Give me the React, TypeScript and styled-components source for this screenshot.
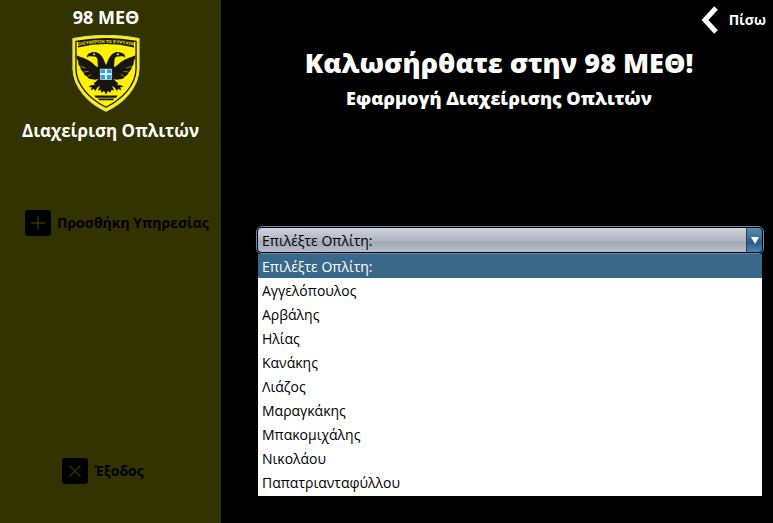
import React, { useState } from "react";
import styled, { createGlobalStyle, css } from "styled-components";

const GlobalStyle = createGlobalStyle`
  *, *::before, *::after { box-sizing: border-box; }
  body { margin: 0; background: #000; font-family: "Open Sans", "Noto Sans", sans-serif; }
`;

const Page = styled.div`
  display: flex;
  min-height: 100vh;
  background: #000;
`;

const Sidebar = styled.aside`
  flex: 0 0 221px;
  display: flex;
  flex-direction: column;
  align-items: center;
  padding: 4px 0 39px;
  background: #333300;
`;

const Badge = styled.div`
  display: flex;
  flex-direction: column;
  align-items: center;
  padding-right: 9px;
`;

const UnitName = styled.div`
  color: #fff;
  font-size: 18px;
  font-weight: 700;
  line-height: 26px;
`;

const Crest = styled.svg`
  width: 68px;
  height: 77px;
  margin-top: 5px;
`;

const SectionName = styled.div`
  margin-top: 6px;
  color: #fff;
  font-size: 17px;
  font-weight: 700;
  line-height: 26px;
`;

const Menu = styled.nav`
  flex: 1;
  align-self: stretch;
  display: flex;
  flex-direction: column;
  justify-content: space-between;
  padding-top: 66px;
`;

const MenuButton = styled.button<{ $centered?: boolean }>`
  display: flex;
  align-items: center;
  justify-content: ${(p) => (p.$centered ? "center" : "flex-start")};
  gap: 6px;
  padding: 0 ${(p) => (p.$centered ? "15px" : "0")} 0 ${(p) => (p.$centered ? "0" : "25px")};
  border: 0;
  background: none;
  color: #000;
  font-family: inherit;
  font-size: 14px;
  font-weight: 700;
  line-height: 26px;
  white-space: nowrap;
  cursor: pointer;
`;

const MenuIcon = styled.svg`
  flex: none;
  width: 26px;
  height: 26px;
`;

const Main = styled.main`
  flex: 1;
  min-width: 0;
  display: flex;
  flex-direction: column;
  padding: 5px 9px 0 35px;
`;

const BackButton = styled.button`
  align-self: flex-end;
  display: flex;
  align-items: center;
  gap: 10px;
  margin-right: -2px;
  padding: 0;
  border: 0;
  background: none;
  color: #fff;
  font-family: inherit;
  font-size: 14px;
  font-weight: 700;
  line-height: 30px;
  cursor: pointer;
`;

const BackIcon = styled.svg`
  width: 18px;
  height: 30px;
`;

const Header = styled.header`
  display: flex;
  flex-direction: column;
  align-items: center;
  padding: 8px 22px 0 0;
  color: #fff;
  text-align: center;
`;

const Title = styled.h1`
  margin: 0;
  font-size: 27px;
  font-weight: 800;
  line-height: 40px;
`;

const Subtitle = styled.h2`
  margin: 0;
  font-size: 18px;
  font-weight: 800;
  line-height: 30px;
`;

const Picker = styled.div`
  position: relative;
  margin-top: 113px;
`;

const SelectFrame = styled.div`
  display: flex;
  height: 28px;
  padding: 1px;
  border: 1px solid #5b8dbb;
  border-radius: 6px;
  background: #000;
`;

const Select = styled.select`
  flex: 1;
  min-width: 0;
  padding: 0 4px;
  border: 0;
  border-radius: 4px 0 0 4px;
  outline: 0;
  appearance: none;
  background: linear-gradient(#d2d4dd, #b1b5c2 50%, #a4a9b8 60%, #b9bdca);
  color: #000;
  font-family: inherit;
  font-size: 14px;
`;

const Arrow = styled.button`
  display: grid;
  place-items: center;
  width: 16px;
  padding: 0;
  border: 0;
  border-left: 1px solid #1d4566;
  border-radius: 0 4px 4px 0;
  background: linear-gradient(#5d8db3, #33658e 50%, #2b5b82 60%, #5088b4);
`;

const Options = styled.ul`
  position: absolute;
  top: 100%;
  left: 2px;
  right: 2px;
  margin: 0;
  padding: 0 0 2px;
  background: #fff;
  list-style: none;
`;

const Option = styled.li<{ $active: boolean }>`
  padding: 2px 4px 0;
  color: #000;
  font-size: 14px;
  line-height: 22px;
  cursor: default;
  ${(p) =>
    p.$active &&
    css`
      background: #39698a;
      color: #fff;
    `}
`;

const names = [
  "Επιλέξτε Οπλίτη:",
  "Αγγελόπουλος",
  "Αρβάλης",
  "Ηλίας",
  "Κανάκης",
  "Λιάζος",
  "Μαραγκάκης",
  "Μπακομιχάλης",
  "Νικολάου",
  "Παπατριανταφύλλου",
];

function EagleHalf() {
  return (
    <g fill="#17150c">
      <path d="M101 92 C97 84 95 74 88 64 C82 53 67 47 57 52 C47 54 43 59 43 68 C48 61 55 63 62 64 C69 62 74 66 75 74 C76 82 74 88 78 98 L84 134 H101 Z" />
      <path d="M80 94 C70 96 66 88 56 80 C42 70 26 66 12 60 C13 68 15 73 18 78 C17 86 20 91 24 95 C24 102 28 107 33 110 C34 116 38 120 44 123 C47 129 53 132 60 131 C67 134 78 132 84 126 Z" />
      <path d="M82 124 C74 134 69 139 64 142 L67 149 C59 147 53 149 49 154 L58 155 L55 164 L64 159 L68 166 L74 156 L82 150 L76 164 L84 163 L87 171 L94 166 L101 176 V124 Z" />
      <circle cx="65" cy="57" r="3" fill="#fff200" />
      <path d="M25 93 L40 98 M35 109 L48 108 M46 123 L56 117" stroke="#fff200" strokeWidth="1.500" />
    </g>
  );
}

function UnitCrest() {
  return (
    <Crest viewBox="0 0 200 228" role="img" aria-label="Έμβλημα">
      <path d="M2 10 Q101 -8 198 10 L198 100 C197 156 151 202 100 226 C49 202 3 156 2 100 Z" fill="#fff200" stroke="#d8d890" strokeWidth="3" />
      <path d="M11 19 Q101 3 189 19 L189 100 C188 150 147 190 100 214 C53 190 12 150 11 100 Z" fill="none" stroke="#17150c" strokeWidth="4" />
      <path d="M17 18 Q101 2 183 18 L183 37 Q101 17 17 37 Z" fill="#17150c" />
      <path id="motto" d="M10 33 Q101 14 190 33" fill="none" />
      <text fill="#fff200" fontFamily="Liberation Sans, sans-serif" fontSize="13" fontWeight="700">
        <textPath href="#motto" startOffset="50%" textAnchor="middle">ΕΛΕΥΘΕΡΟΝ ΤΟ ΕΥΨΥΧΟΝ</textPath>
      </text>
      <EagleHalf />
      <g transform="translate(200 0) scale(-1 1)">
        <EagleHalf />
      </g>
      <rect x="83" y="101" width="34" height="31" fill="#2aa4e6" />
      <path d="M100 101 V132 M83 116 H117" stroke="#fff" strokeWidth="5" />
      <rect x="83" y="101" width="34" height="31" fill="none" stroke="#d8eef5" strokeWidth="2" />
      <path d="M66 179 H134 L131 186 H69 Z M76 188 H124 L121 193 H79 Z" fill="#17150c" />
    </Crest>
  );
}

export default function App() {
  const [selected, setSelected] = useState(names[0]);

  return (
    <>
      <GlobalStyle />
      <Page>
        <Sidebar>
          <Badge>
            <UnitName>98 ΜΕΘ</UnitName>
            <UnitCrest />
          </Badge>
          <SectionName>Διαχείριση Οπλιτών</SectionName>
          <Menu>
            <MenuButton type="button">
              <MenuIcon viewBox="0 0 26 26" aria-hidden="true">
                <rect width="26" height="26" rx="3" fill="#000" />
                <path d="M13 6 V20 M6 13 H20" stroke="#333300" strokeWidth="1.4" />
              </MenuIcon>
              Προσθήκη Υπηρεσίας
            </MenuButton>
            <MenuButton type="button" $centered>
              <MenuIcon viewBox="0 0 26 26" aria-hidden="true">
                <rect width="26" height="26" rx="3" fill="#000" />
                <path d="M7.500 7.500 L18.500 18.500 M18.500 7.500 L7.500 18.500" stroke="#333300" strokeWidth="1.400" />
              </MenuIcon>
              Έξοδος
            </MenuButton>
          </Menu>
        </Sidebar>
        <Main>
          <BackButton type="button">
            <BackIcon viewBox="0 0 18 30" aria-hidden="true">
              <path d="M15 3 L4 15 L15 27" fill="none" stroke="#fff" strokeWidth="5" />
            </BackIcon>
            Πίσω
          </BackButton>
          <Header>
            <Title>Καλωσήρθατε στην 98 ΜΕΘ!</Title>
            <Subtitle>Εφαρμογή Διαχείρισης Οπλιτών</Subtitle>
          </Header>
          <Picker>
            <SelectFrame>
              <Select aria-label="Επιλέξτε Οπλίτη" value={selected} onChange={(e) => setSelected(e.target.value)}>
                {names.map((name) => (
                  <option key={name}>{name}</option>
                ))}
              </Select>
              <Arrow type="button" aria-label="Άνοιγμα λίστας">
                <svg width="8" height="7" viewBox="0 0 8 7" aria-hidden="true">
                  <path d="M0 0 H8 L4 7 Z" fill="#fff" />
                </svg>
              </Arrow>
            </SelectFrame>
            <Options role="listbox" aria-label="Οπλίτες">
              {names.map((name) => (
                <Option
                  key={name}
                  role="option"
                  aria-selected={name === selected}
                  $active={name === selected}
                  onClick={() => setSelected(name)}
                >
                  {name}
                </Option>
              ))}
            </Options>
          </Picker>
        </Main>
      </Page>
    </>
  );
}
